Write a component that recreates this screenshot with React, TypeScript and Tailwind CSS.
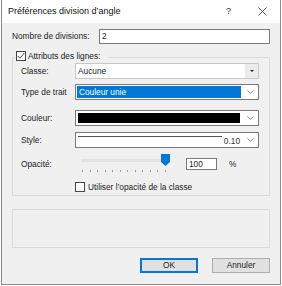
import { FC, ReactNode } from 'react';

const Chevron: FC = () => (
    <svg width="7" height="4" viewBox="0 0 7 4" className="shrink-0">
        <polyline points="0.5,0.5 3.5,3.3 6.5,0.5" fill="none" stroke="#808080" strokeWidth="0.9" />
    </svg>
);

const Check: FC<{ checked?: boolean }> = ({ checked }) => (
    <div className="w-[10px] h-[10px] border border-[#444] bg-white flex items-center justify-center shrink-0">
        {checked && (
            <svg width="8" height="8" viewBox="0 0 8 8">
                <polyline points="0.8,4 3,6.3 7.3,1" fill="none" stroke="#333" strokeWidth="0.9" />
            </svg>
        )}
    </div>
);

const Row: FC<{ label: string; className?: string; children: ReactNode }> = ({ label, className, children }) => (
    <div className={`flex items-center ${className ?? ''}`}>
        <div className="w-[54px] shrink-0">{label}</div>
        {children}
    </div>
);

const ticks = [0, 1, 2, 3, 4, 5, 6, 7, 8, 9, 10, 11];

export default function App() {
    return (
        <div className="w-[282px] h-[286px] bg-white text-[8.3px] leading-none text-[#1a1a1a]" style={{ fontFamily: '"Liberation Sans", Arial, sans-serif' }}>
            <div className="ml-[1px] w-[280px] h-[285px] border-x border-b border-[#8a8a8a] bg-[#f0f0f0] flex flex-col">
                {/* title bar */}
                <div className="h-[23px] bg-white flex items-center pl-[6px] pr-[13px] shrink-0">
                    <div className="text-[9px] flex-1 text-[#111]">Préférences division d’angle</div>
                    <div className="text-[9px] w-[32px] text-[#333]">?</div>
                    <svg width="9" height="9" viewBox="0 0 9 9">
                        <path d="M0.5 0.5 L8.5 8.5 M8.5 0.5 L0.5 8.5" stroke="#333" strokeWidth="0.8" />
                    </svg>
                </div>

                <div className="px-[10px] flex flex-col">
                    {/* nombre de divisions */}
                    <div className="flex items-center mt-[6px]">
                        <div className="w-[87px] shrink-0">Nombre de divisions:</div>
                        <div className="flex-1 h-[15px] border border-[#7a7a7a] bg-white flex items-center pl-[2px]">2</div>
                    </div>

                    {/* group box */}
                    <div className="relative mt-[13px] h-[139px] border border-[#dcdcdc] pl-[8px] pr-[10px] pt-[5px] flex flex-col">
                        <div className="absolute left-[2px] top-[-7px] flex items-center gap-[2px] bg-[#f0f0f0] pr-[8px] pl-[1px]">
                            <Check checked />
                            <span>Attributs des lignes:</span>
                        </div>

                        <Row label="Classe:">
                            <div className="flex-1 h-[16px] border border-[#c8c8c8] bg-white flex items-center">
                                <div className="flex-1 pl-[2px]">Aucune</div>
                                <div className="w-[13px] h-full bg-[#ececec] flex items-center justify-center">
                                    <div className="w-0 h-0 border-l-[2px] border-r-[2px] border-t-[2px] border-l-transparent border-r-transparent border-t-[#222]" />
                                </div>
                            </div>
                        </Row>

                        <Row label="Type de trait" className="mt-[5px]">
                            <div className="flex-1 h-[16px] border border-[#7a7a7a] bg-white flex items-center p-[1px] pr-[4px]">
                                <div className="flex-1 h-full bg-[#0078d7] text-white flex items-center pl-[2px] mr-[6px]">Couleur unie</div>
                                <Chevron />
                            </div>
                        </Row>

                        <Row label="Couleur:" className="mt-[10px]">
                            <div className="flex-1 h-[16px] border border-[#7a7a7a] bg-white flex items-center p-[2px] pr-[4px]">
                                <div className="flex-1 h-full bg-black mr-[7px]" />
                                <Chevron />
                            </div>
                        </Row>

                        <Row label="Style:" className="mt-[6px]">
                            <div className="flex-1 h-[16px] border border-[#7a7a7a] bg-white flex items-center pl-[2px] pr-[4px]">
                                <div className="flex-1 h-px bg-[#555] self-start mt-[3px]" />
                                <span className="ml-[2px] mr-[7px] mt-[2px] text-[#333]">0.10</span>
                                <Chevron />
                            </div>
                        </Row>

                        <Row label="Opacité:" className="mt-[6px]">
                            <div className="relative w-[96px] h-[20px] ml-[1px]">
                                <div className="absolute left-[5px] right-[5px] top-[5px] h-[3px] bg-[#e2e2e2] border border-[#e2e2e2]" />
                                <svg className="absolute left-[85px] top-0" width="9" height="12" viewBox="0 0 9 12">
                                    <path d="M0 0 H9 V8 L4.5 12 L0 8 Z" fill="#0078d7" />
                                </svg>
                                <div className="absolute left-[6px] right-[6px] top-[16px] flex justify-between">
                                    {ticks.map(t => (
                                        <div key={t} className="w-px h-[2px] bg-[#9a9a9a]" />
                                    ))}
                                </div>
                            </div>
                            <div className="ml-[14px] w-[31px] h-[12px] border border-[#7a7a7a] bg-white flex items-center pl-[2px]">100</div>
                            <span className="ml-[12px]">%</span>
                        </Row>

                        <div className="flex items-center gap-[3px] ml-[54px] mt-[8px]">
                            <Check />
                            <span>Utiliser l’opacité de la classe</span>
                        </div>
                    </div>

                    {/* empty box */}
                    <div className="mt-[13px] h-[39px] border border-[#dcdcdc]" />

                    {/* buttons */}
                    <div className="flex justify-end gap-[14px] mt-[10px]">
                        <button className="w-[58px] h-[15px] border-2 border-[#0078d7] bg-[#e1e1e1] flex items-center justify-center">OK</button>
                        <button className="w-[58px] h-[15px] border border-[#adadad] bg-[#e1e1e1] flex items-center justify-center">Annuler</button>
                    </div>
                </div>
            </div>
        </div>
    );
}
